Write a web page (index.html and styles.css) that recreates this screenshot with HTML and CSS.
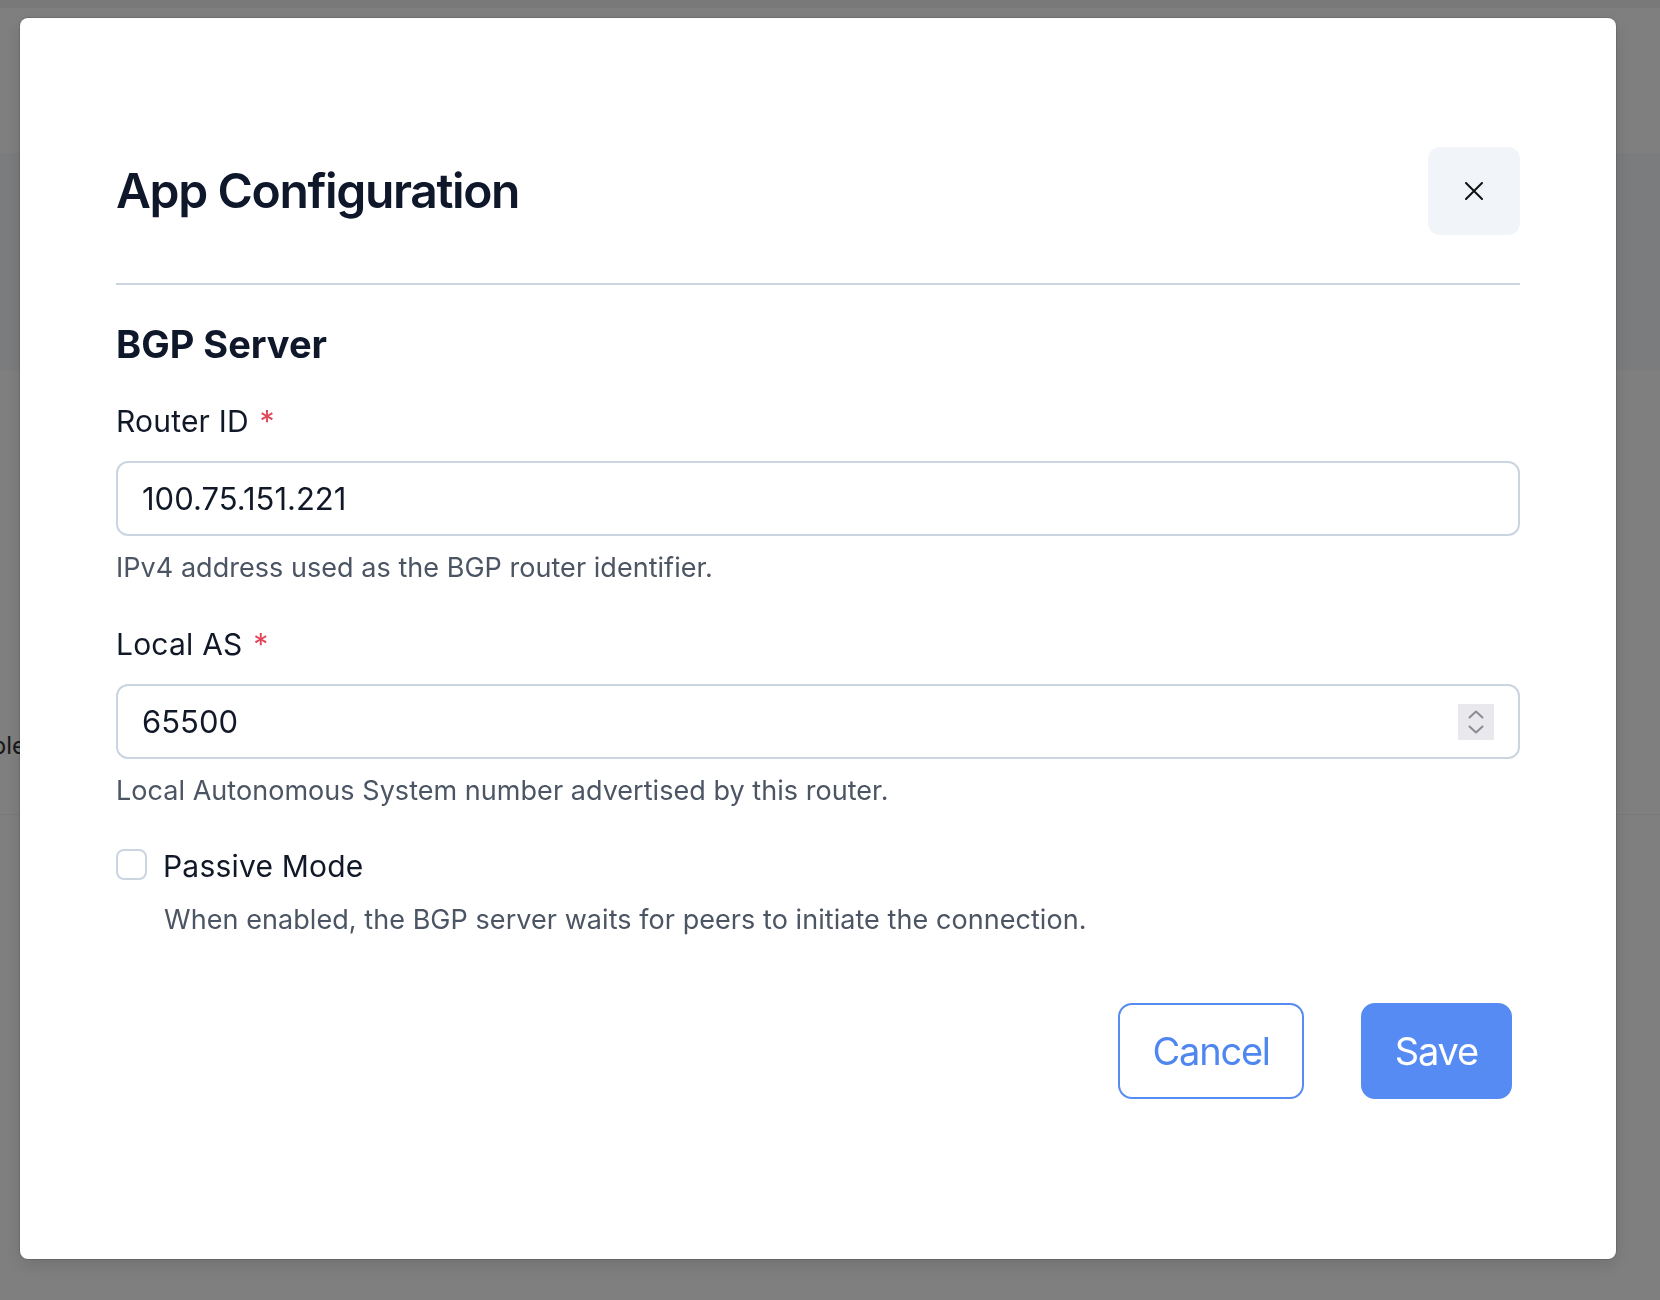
FILE: index.html
```html
<!DOCTYPE html>
<html lang="en">
<head>
<meta charset="utf-8">
<title>App Configuration</title>
<link rel="stylesheet" href="styles.css">
</head>
<body>
<div class="page">
  <div class="page-topbar"></div>
  <div class="page-head"></div>
  <div class="page-band"></div>
  <div class="page-body">
    <div class="page-cut"><span class="page-text">Disable</span></div>
  </div>
</div>
<div class="overlay"></div>
<div class="modal" role="dialog" aria-labelledby="modal-title">
  <div class="modal-header">
    <h1 class="modal-title" id="modal-title">App Configuration</h1>
    <button class="close-btn" type="button" aria-label="Close">
      <svg width="18" height="18" viewBox="0 0 18 18" aria-hidden="true">
        <path d="M1 1 L17 17 M17 1 L1 17" stroke="#111111" stroke-width="2" stroke-linecap="round" fill="none"/>
      </svg>
    </button>
  </div>
  <div class="divider"></div>
  <h2 class="section-title">BGP Server</h2>

  <div class="field">
    <label class="field-label" for="router-id">Router ID <span class="req">*</span></label>
    <div class="field-box">
      <input class="field-input" id="router-id" type="text" value="100.75.151.221">
    </div>
    <p class="field-help">IPv4 address used as the BGP router identifier.</p>
  </div>

  <div class="field field-next">
    <label class="field-label" for="local-as">Local AS <span class="req">*</span></label>
    <div class="field-box">
      <input class="field-input" id="local-as" type="text" value="65500">
      <span class="spinner" aria-hidden="true">
        <svg width="36" height="36" viewBox="0 0 36 36">
          <path d="M11.5 13.5 L18 7.5 L24.5 13.5 M11.5 22.5 L18 28.5 L24.5 22.5" stroke="#8b8b92" stroke-width="2" fill="none" stroke-linecap="round" stroke-linejoin="round"/>
        </svg>
      </span>
    </div>
    <p class="field-help">Local Autonomous System number advertised by this router.</p>
  </div>

  <div class="check-field">
    <label class="check-row">
      <input class="check-box" type="checkbox">
      <span class="check-label">Passive Mode</span>
    </label>
    <p class="check-help">When enabled, the BGP server waits for peers to initiate the connection.</p>
  </div>

  <div class="modal-footer">
    <button class="btn btn-outline" type="button">Cancel</button>
    <button class="btn btn-primary" type="button">Save</button>
  </div>
</div>
</body>
</html>
```

FILE: styles.css
```css
* {
  box-sizing: border-box;
}

html, body {
  margin: 0;
  padding: 0;
}

body {
  font-family: Inter, "Noto Sans", "DejaVu Sans", sans-serif;
  background: #ffffff;
  width: 1660px;
  height: 1300px;
  overflow: hidden;
}

/* background page (dimmed by the overlay) */
.page {
  display: flex;
  flex-direction: column;
}

.page-topbar {
  height: 8px;
  background: #f2f2f2;
}

.page-head {
  height: 145px;
  background: #ffffff;
}

.page-band {
  height: 217px;
  background: #f6f8fc;
}

.page-body {
  padding-top: 361px;
  height: 445px;
  border-bottom: 1px solid #f3f3f3;
}

.page-cut {
  width: 26px;
  display: flex;
  justify-content: flex-end;
}

.page-text {
  font-size: 24px;
  line-height: 30px;
  color: #333333;
  white-space: nowrap;
}

.overlay {
  position: fixed;
  inset: 0;
  background: rgba(0, 0, 0, 0.5);
}

/* modal */
.modal {
  position: fixed;
  left: 20px;
  top: 18px;
  width: 1596px;
  height: 1241px;
  background: #ffffff;
  border-radius: 8px;
  box-shadow: 0 0 0 1px rgba(0, 0, 0, 0.12), 0 6px 18px rgba(0, 0, 0, 0.12);
  padding: 129px 96px 0 96px;
  display: flex;
  flex-direction: column;
}

.modal-header {
  display: flex;
  align-items: center;
  justify-content: space-between;
  height: 88px;
}

.modal-title {
  margin: 0;
  font-size: 48px;
  line-height: 58px;
  font-weight: 600;
  color: #0f172a;
  letter-spacing: -1.35px;
}

.close-btn {
  width: 92px;
  height: 88px;
  border: 0;
  border-radius: 12px;
  background: #f1f4f9;
  display: flex;
  align-items: center;
  justify-content: center;
  padding: 0;
  cursor: pointer;
}

.divider {
  margin-top: 48px;
  height: 2px;
  background: #cbd5e1;
}

.section-title {
  margin: 37px 0 0 0;
  font-size: 38px;
  line-height: 44px;
  font-weight: 700;
  color: #0f172a;
  letter-spacing: 0;
}

.field {
  margin-top: 37px;
  display: flex;
  flex-direction: column;
}

.field-next {
  margin-top: 41px;
}

.field-label {
  font-size: 30px;
  line-height: 36px;
  color: #111827;
  letter-spacing: 0.2px;
}

.req {
  color: #e2455a;
  margin-left: 2px;
}

.field-box {
  margin-top: 22px;
  height: 75px;
  border: 2px solid #cbd5e1;
  border-radius: 12px;
  display: flex;
  align-items: center;
  background: #ffffff;
}

.field-input {
  flex: 1;
  min-width: 0;
  height: 100%;
  border: 0;
  outline: none;
  background: transparent;
  padding: 0 24px;
  font-family: inherit;
  font-size: 31px;
  color: #111827;
}

.spinner {
  width: 36px;
  height: 36px;
  margin-right: 24px;
  background: #e8e8ed;
  display: flex;
}

.field-help {
  margin: 15px 0 0 0;
  font-size: 27px;
  line-height: 34px;
  color: #4b5563;
  letter-spacing: 0.04px;
}

.check-field {
  margin-top: 40px;
}

.check-row {
  display: flex;
  align-items: flex-start;
  gap: 16px;
  height: 36px;
}

.check-box {
  appearance: none;
  -webkit-appearance: none;
  margin: 1px 0 0 0;
  width: 31px;
  height: 31px;
  border: 2px solid #cbd5e1;
  border-radius: 8px;
  background: #ffffff;
}

.check-label {
  font-size: 30px;
  line-height: 36px;
  color: #111827;
  letter-spacing: 0.2px;
}

.check-help {
  margin: 19px 0 0 0;
  padding-left: 48px;
  font-size: 27px;
  line-height: 34px;
  color: #4b5563;
  letter-spacing: 0.06px;
}

.modal-footer {
  margin-top: 66px;
  padding-right: 8px;
  display: flex;
  justify-content: flex-end;
  gap: 57px;
}

.btn {
  height: 96px;
  padding: 0 32px;
  border-radius: 14px;
  border: 2px solid #558bf2;
  font-family: inherit;
  font-size: 38px;
  font-weight: 400;
  letter-spacing: -1.2px;
  cursor: pointer;
}

.btn-outline {
  background: #ffffff;
  color: #4f86f0;
}

.btn-primary {
  background: #558bf2;
  color: #ffffff;
}
```
